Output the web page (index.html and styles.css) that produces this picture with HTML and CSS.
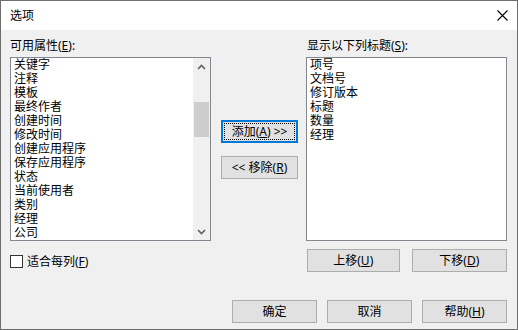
FILE: index.html
```html
<!DOCTYPE html>
<html lang="zh-CN">
<head>
<meta charset="utf-8">
<title>选项</title>
<link rel="stylesheet" href="styles.css">
</head>
<body>
<div class="window">
  <div class="titlebar">
    <span class="title">选项</span>
    <svg class="close" width="11" height="11" viewBox="0 0 11 11"><path d="M0.5 0.5 L10.5 10.5 M10.5 0.5 L0.5 10.5" stroke="#000" stroke-width="1.1" fill="none"/></svg>
  </div>
  <div class="content">
    <div class="main">
      <div class="label">可用属性(<u>E</u>):</div>
      <div class="spacer"></div>
      <div class="label">显示以下列标题(<u>S</u>):</div>

      <div class="listbox">
        <ul class="items">
          <li>关键字</li>
          <li>注释</li>
          <li>模板</li>
          <li>最终作者</li>
          <li>创建时间</li>
          <li>修改时间</li>
          <li>创建应用程序</li>
          <li>保存应用程序</li>
          <li>状态</li>
          <li>当前使用者</li>
          <li>类别</li>
          <li>经理</li>
          <li>公司</li>
        </ul>
        <div class="scrollbar">
          <div class="arrow"><svg width="9" height="6" viewBox="0 0 9 6"><path d="M1 5 L4.5 1.5 L8 5" stroke="#606060" stroke-width="1.6" fill="none"/></svg></div>
          <div class="track"><div class="thumb"></div></div>
          <div class="arrow"><svg width="9" height="6" viewBox="0 0 9 6"><path d="M1 1 L4.5 4.5 L8 1" stroke="#606060" stroke-width="1.6" fill="none"/></svg></div>
        </div>
      </div>

      <div class="middle">
        <button class="btn focused"><span class="focusrect">添加(<u>A</u>) &gt;&gt;</span></button>
        <button class="btn">&lt;&lt; 移除(<u>R</u>)</button>
      </div>

      <div class="listbox">
        <ul class="items">
          <li>项号</li>
          <li>文档号</li>
          <li>修订版本</li>
          <li>标题</li>
          <li>数量</li>
          <li>经理</li>
        </ul>
      </div>

      <label class="check"><span class="box"></span><span class="check-text">适合每列(<u>F</u>)</span></label>
      <div class="spacer"></div>
      <div class="moves">
        <button class="btn move-up">上移(<u>U</u>)</button>
        <button class="btn move-down">下移(<u>D</u>)</button>
      </div>
    </div>
    <div class="footer">
      <button class="btn wide">确定</button>
      <button class="btn wide">取消</button>
      <button class="btn wide">帮助(<u>H</u>)</button>
    </div>
  </div>
</div>
</body>
</html>
```

FILE: styles.css
```css
* { box-sizing: border-box; }
html, body { margin: 0; padding: 0; background: #f0f0f0; }
body {
  font-family: "Noto Sans", "Noto Sans CJK SC", sans-serif;
  font-size: 12px;
  color: #000;
}
.window {
  width: 518px;
  height: 330px;
  border: 1px solid #6e6e6e;
  display: flex;
  flex-direction: column;
  background: #f0f0f0;
}
.titlebar {
  height: 29px;
  background: #fff;
  display: flex;
  align-items: center;
  justify-content: space-between;
  padding: 0 9px 0 9px;
}
.title { font-size: 12px; line-height: 16px; }
.content {
  flex: 1;
  display: flex;
  flex-direction: column;
  padding: 8px 9px 6px 9px;
}
.main {
  display: grid;
  grid-template-columns: 201px 95px 201px;
  grid-template-rows: 19px 184px auto;
}
.label { line-height: 16px; white-space: nowrap; }
.main > .label:nth-child(3) { padding-left: 1px; }
u { text-decoration: underline; text-underline-offset: 1px; }
.listbox {
  border: 1px solid #828790;
  background: #fff;
  display: flex;
  overflow: hidden;
}
.items {
  list-style: none;
  margin: 0;
  padding: 0 0 0 3px;
  flex: 1;
}
.items li { line-height: 14px; height: 14px; white-space: nowrap; }
.scrollbar {
  width: 17px;
  background: #f0f0f0;
  display: flex;
  flex-direction: column;
}
.arrow {
  height: 17px;
  display: flex;
  align-items: center;
  justify-content: center;
}
.track { flex: 1; padding-top: 27px; }
.thumb { height: 35px; margin: 0 1px; background: #cdcdcd; }
.middle {
  display: flex;
  flex-direction: column;
  align-items: flex-start;
  padding: 63px 0 0 10px;
  gap: 13px;
}
.btn {
  font: inherit;
  color: #000;
  background: #e1e1e1;
  border: 1px solid #adadad;
  height: 23px;
  padding: 0;
  display: flex;
  align-items: center;
  justify-content: center;
  line-height: 16px;
  white-space: nowrap;
}
.middle .btn { width: 77px; }
.btn.focused { border: 2px solid #0078d7; padding: 1px; }
.focusrect {
  border: 1px dotted #000;
  width: 100%;
  height: 100%;
  display: flex;
  align-items: center;
  justify-content: center;
}
.check {
  display: flex;
  align-items: center;
  gap: 4px;
  margin-top: 10px;
  line-height: 13px;
}
.check-text { white-space: nowrap; }
.box {
  width: 13px;
  height: 13px;
  border: 1px solid #333;
  background: #fff;
}
.moves {
  display: flex;
  gap: 12px;
  margin-top: 8px;
  padding-left: 1px;
}
.move-up { width: 93px; }
.move-down { width: 96px; }
.footer {
  margin-top: auto;
  display: flex;
  justify-content: flex-end;
  gap: 10px;
  padding-right: 1px;
}
.btn.wide { width: 85px; }
```
